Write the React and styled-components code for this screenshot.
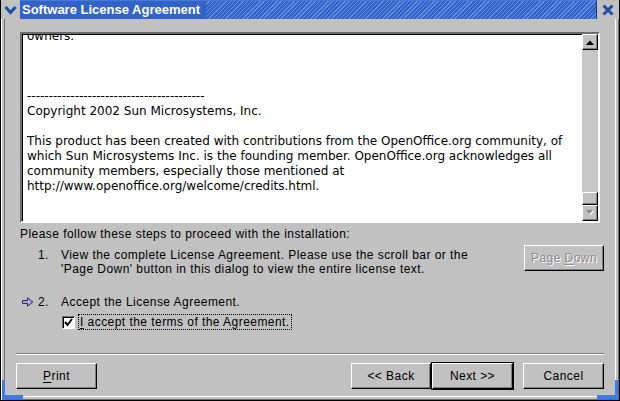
import React from "react";
import styled, { createGlobalStyle } from "styled-components";

const GlobalStyle = createGlobalStyle`
  html, body {
    margin: 0;
    padding: 0;
    background: #c1c1c1;
    overflow: hidden;
  }
`;

const Window = styled.div`
  position: relative;
  width: 620px;
  height: 401px;
  box-sizing: border-box;
  display: flex;
  flex-direction: column;
  background: #c1c1c1;
  border: 1px solid #000;
  border-top: 0;
  font-family: "Liberation Sans", Arial, sans-serif;
  color: #000;
`;

//-------------Barra de titulo-------------
const TitleBar = styled.div`
  display: flex;
  height: 19px;
  flex-shrink: 0;
`;
const FrameButton = styled.div`
  width: ${(props) => props.W || "18px"};
  display: flex;
  align-items: center;
  justify-content: center;
  background: #c1c1c1;
`;
const Caption = styled.div`
  flex: 1;
  display: flex;
  background: #3163c9;
  border-right: 1px solid #163a86;
  border-top: 1px solid #4a78d8;
`;
const CaptionText = styled.div`
  color: #fff;
  font-weight: bold;
  font-size: 13px;
  line-height: 18px;
  padding: 0 6px 0 2px;
  white-space: nowrap;
`;
const Hatch = styled.div`
  flex: 1;
  background: repeating-linear-gradient(
    135deg,
    #3163c9 0px,
    #3163c9 2px,
    #6390e0 2px,
    #6390e0 3px
  );
`;
//-------------------Fin-------------------

const Frame = styled.div`
  flex: 1;
  display: flex;
  padding: 0 3px 3px 3px;
  box-shadow: inset 1px 0 #fff, inset -1px -1px #6d6d6d;
`;
const Client = styled.div`
  flex: 1;
  display: flex;
  flex-direction: column;
  padding: 13px 11px 7px 11px;
  border-left: 1px solid #6d6d6d;
  border-right: 1px solid #fff;
  border-bottom: 1px solid #fff;
`;

//-------------Area de licencia-------------
const TextBox = styled.div`
  display: flex;
  height: 187px;
  margin: 0 4px 0 4px;
  background: #fff;
  border: 2px solid;
  border-color: #6d6d6d #fff #fff #6d6d6d;
  box-shadow: inset 1px 1px #000;
`;
const TextView = styled.div`
  flex: 1;
  overflow: hidden;
  padding: 0 4px 0 5px;
`;
const LicenseText = styled.div`
  margin-top: -5px;
  font-family: "DejaVu Sans", "Bitstream Vera Sans", sans-serif;
  font-size: 12px;
  line-height: 15px;
  white-space: pre;
`;
const ScrollBar = styled.div`
  width: 16px;
  display: flex;
  flex-direction: column;
  background: #c6c6c6;
`;
const Trough = styled.div`
  flex: 1;
`;
const ScrollButton = styled.div`
  height: ${(props) => props.H || "16px"};
  box-sizing: border-box;
  display: flex;
  align-items: center;
  justify-content: center;
  background: #c1c1c1;
  border: 1px solid;
  border-color: #fff #000 #000 #fff;
  box-shadow: inset -1px -1px #808080;
`;
//-------------------Fin-------------------

//-------------Pasos-------------
const Steps = styled.div`
  margin: 4px 0 0 4px;
  font-size: 12px;
  letter-spacing: 0.45px;
  line-height: 14px;
`;
const Intro = styled.div`
  margin-left: 0;
`;
const StepRow = styled.div`
  display: grid;
  grid-template-columns: 18px 23px 1fr auto;
  margin-top: ${(props) => props.MT || "0"};
`;
const Marker = styled.div`
  display: flex;
  align-items: center;
  height: 14px;
  padding-left: 2px;
`;
const StepBody = styled.div`
  display: flex;
  flex-direction: column;
`;
const CheckRow = styled.label`
  display: flex;
  align-items: center;
  margin-top: 5px;
  margin-left: 1px;
  gap: 3px;
`;
const CheckBox = styled.span`
  width: 13px;
  height: 13px;
  box-sizing: border-box;
  display: flex;
  align-items: center;
  justify-content: center;
  background: #fff;
  border: 1px solid;
  border-color: #6d6d6d #fff #fff #6d6d6d;
  box-shadow: inset 1px 1px #000;
`;
const FocusLabel = styled.span`
  border: 1px dotted #000;
  padding: 0 1px;
  line-height: 14px;
`;
const Mn = styled.span`
  text-decoration: underline;
  text-underline-offset: 2px;
`;
const SideButton = styled.div`
  margin-top: -3px;
`;
//-------------------Fin-------------------

const Spacer = styled.div`
  flex: 1;
`;
const Separator = styled.div`
  height: 0;
  border-top: 1px solid #808080;
  border-bottom: 1px solid #fff;
  margin-bottom: 8px;
`;
const ButtonRow = styled.div`
  display: flex;
  align-items: center;
`;
const Group = styled.div`
  display: flex;
  gap: ${(props) => props.G || "0"};
  margin-left: ${(props) => props.ML || "0"};
`;
const Button = styled.button`
  width: ${(props) => props.W || "81px"};
  height: 26px;
  box-sizing: border-box;
  padding: 0;
  background: #c1c1c1;
  font-family: "Liberation Sans", Arial, sans-serif;
  font-size: 12px;
  letter-spacing: 0.45px;
  color: ${(props) => (props.disabled ? "#8b8b8b" : "#000")};
  text-shadow: ${(props) => (props.disabled ? "1px 1px #fff" : "none")};
  border: 1px solid;
  border-color: #fff #000 #000 #fff;
  box-shadow: inset -1px -1px #808080;
  outline: ${(props) => (props.Default ? "1px solid #000" : "none")};
  outline-offset: 0;
  cursor: default;
`;

const Corner = styled.div`
  position: absolute;
  bottom: 1px;
  ${(props) => (props.Right ? "right: 1px;" : "left: 1px;")}
  width: 21px;
  height: 19px;
  box-sizing: border-box;
  border-bottom: 4px solid #3b7ce8;
  ${(props) =>
    props.Right
      ? "border-right: 3px solid #3b7ce8;"
      : "border-left: 3px solid #3b7ce8;"}
`;

const licenseLines = [
  "owners.",
  "",
  "",
  "",
  "-----------------------------------------",
  "Copyright 2002 Sun Microsystems, Inc.",
  "",
  "This product has been created with contributions from the OpenOffice.org community, of",
  "which Sun Microsystems Inc. is the founding member. OpenOffice.org acknowledges all",
  "community members, especially those mentioned at",
  "http://www.openoffice.org/welcome/credits.html.",
  "",
  "",
];

const Arrow = () => (
  <svg width="12" height="10" viewBox="0 0 12 10">
    <path
      d="M0.5 3.5 H5.5 V0.8 L10.8 5 L5.5 9.2 V6.5 H0.5 Z"
      fill="#a9a9ee"
      stroke="#2a2a55"
      strokeWidth="1"
    />
  </svg>
);

export default function App() {
  return (
    <>
      <GlobalStyle />
      <Window>
        <TitleBar>
          <FrameButton W="19px">
            <svg width="13" height="10" viewBox="0 0 13 10">
              <path d="M1.5 2 L6.5 7.5 L11.5 2" fill="none" stroke="#1f4fa6" strokeWidth="3" />
            </svg>
          </FrameButton>
          <Caption>
            <CaptionText>Software License Agreement</CaptionText>
            <Hatch />
          </Caption>
          <FrameButton W="22px">
            <svg width="12" height="12" viewBox="0 0 12 12">
              <path d="M1.5 1.5 L10.5 10.5 M10.5 1.5 L1.5 10.5" stroke="#1f4fa6" strokeWidth="3" />
            </svg>
          </FrameButton>
        </TitleBar>
        <Frame>
          <Client>
            <TextBox>
              <TextView>
                <LicenseText>{licenseLines.join("\n")}</LicenseText>
              </TextView>
              <ScrollBar>
                <ScrollButton>
                  <svg width="8" height="5" viewBox="0 0 8 5">
                    <path d="M0 5 L4 0.5 L8 5 Z" fill="#000" />
                  </svg>
                </ScrollButton>
                <Trough />
                <ScrollButton H="13px" />
                <ScrollButton>
                  <svg width="9" height="6" viewBox="0 0 9 6">
                    <path d="M1 1 L8 1 L4.5 5 Z" fill="#fff" />
                    <path d="M0 0 L7 0 L3.5 4 Z" fill="#8b8b8b" />
                  </svg>
                </ScrollButton>
              </ScrollBar>
            </TextBox>
            <Steps>
              <Intro>Please follow these steps to proceed with the installation:</Intro>
              <StepRow MT="7px">
                <Marker />
                <div>1.</div>
                <div>
                  View the complete License Agreement. Please use the scroll bar or the
                  <br />
                  'Page Down' button in this dialog to view the entire license text.
                </div>
                <SideButton>
                  <Button W="80px" disabled>
                    Page <Mn>D</Mn>own
                  </Button>
                </SideButton>
              </StepRow>
              <StepRow MT="19px">
                <Marker>
                  <Arrow />
                </Marker>
                <div>2.</div>
                <StepBody>
                  <div>Accept the License Agreement.</div>
                  <CheckRow>
                    <CheckBox>
                      <svg width="9" height="9" viewBox="0 0 9 9">
                        <path d="M1 4 L3.5 7 L8 1" fill="none" stroke="#000" strokeWidth="2" />
                      </svg>
                    </CheckBox>
                    <FocusLabel>
                      <Mn>I</Mn> accept the terms of the Agreement.
                    </FocusLabel>
                  </CheckRow>
                </StepBody>
                <div />
              </StepRow>
            </Steps>
            <Spacer />
            <Separator />
            <ButtonRow>
              <Button>
                <Mn>P</Mn>rint
              </Button>
              <Group ML="auto" G="1px">
                <Button W="80px">&lt;&lt; Back</Button>
                <Button W="81px" Default>
                  Next &gt;&gt;
                </Button>
              </Group>
              <Group ML="10px">
                <Button>Cancel</Button>
              </Group>
            </ButtonRow>
          </Client>
        </Frame>
        <Corner />
        <Corner Right />
      </Window>
    </>
  );
}
